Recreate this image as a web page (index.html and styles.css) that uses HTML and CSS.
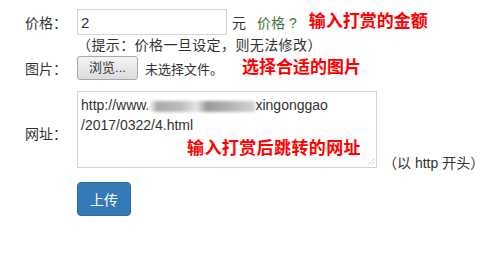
FILE: index.html
```html
<!DOCTYPE html>
<html lang="zh">
<head>
    <meta charset="UTF-8">
    <meta name="viewport" content="width=device-width, initial-scale=1.0">
    <title>打赏设置</title>
    <link rel="stylesheet" href="styles.css">
</head>
<body>
    <form class="reward-form">
        <div class="row row-price">
            <label class="label">价格：</label>
            <input type="text" class="price-input" value="2">
            <span class="unit">元</span>
            <span class="help">价格 ?</span>
            <span class="note">输入打赏的金额</span>
        </div>
        <div class="hint">（提示：价格一旦设定，则无法修改）</div>

        <div class="row row-image">
            <label class="label">图片：</label>
            <span class="browse-btn">浏览...</span>
            <span class="file-name">未选择文件。</span>
            <span class="note note-image">选择合适的图片</span>
        </div>

        <div class="row row-url">
            <label class="label label-url">网址：</label>
            <div class="url-box">
                <div class="url-text">http://www.<span class="blur"></span>xingonggao<br>/2017/0322/4.html</div>
                <span class="note note-url">输入打赏后跳转的网址</span>
                <svg class="grip" width="8" height="8" viewBox="0 0 8 8">
                    <path d="M7 1 L1 7 M7 4 L4 7" stroke="#b5b5b5" stroke-width="1" stroke-dasharray="1 1"/>
                </svg>
            </div>
            <span class="url-hint">（以 http 开头）</span>
        </div>

        <button type="button" class="submit-btn">上传</button>
    </form>
</body>
</html>
```

FILE: styles.css
```css
body {
    margin: 0;
    background-color: #fff;
    font-family: "Liberation Sans", "Noto Sans CJK SC", sans-serif;
    font-size: 14px;
    color: #333;
}

.reward-form {
    padding: 9px 0 0 25px;
}

.row {
    display: flex;
    align-items: center;
}

.label {
    width: 52px;
    flex-shrink: 0;
}

.price-input {
    box-sizing: border-box;
    width: 150px;
    height: 26px;
    padding: 2px 3px;
    border: 1px solid #d4d4d4;
    font-family: "Liberation Sans", sans-serif;
    font-size: 15px;
    color: #333;
    outline: none;
}

.unit {
    margin-left: 5px;
}

.help {
    margin-left: 11px;
    color: #3c763d;
}

/* red annotations */
.note {
    margin-left: 12px;
    color: #f00;
    font-weight: bold;
    font-size: 17px;
    line-height: 20px;
}

.hint {
    margin: 3px 0 0 52px;
    line-height: 14px;
    letter-spacing: 0.4px;
}

.row-image {
    margin-top: 4px;
}

.browse-btn {
    box-sizing: border-box;
    width: 61px;
    height: 24px;
    line-height: 22px;
    text-align: center;
    border: 1px solid #a9a9a9;
    border-radius: 3px;
    background: linear-gradient(#f4f4f4, #dcdcdc);
    font-size: 13px;
}

.file-name {
    margin-left: 7px;
    font-size: 13px;
}

.note-image {
    margin-left: 19px;
}

.row-url {
    margin-top: 11px;
    align-items: stretch;
}

.label-url {
    align-self: center;
    padding-top: 6px;
}

.url-box {
    position: relative;
    box-sizing: border-box;
    width: 300px;
    height: 77px;
    border: 1px solid #d4d4d4;
    padding: 3px 3px;
}

.url-text {
    font-size: 14px;
    line-height: 20px;
    color: #333;
}

.blur {
    display: inline-block;
    width: 106px;
    height: 11px;
    vertical-align: middle;
    background: linear-gradient(90deg, #fff 0, #aaa 8%, #bdbdbd 30%, #e4e4e4 45%, #999 55%, #b8b8b8 80%, #d4d4d4 100%);
    filter: blur(1.5px);
}

.note-url {
    position: absolute;
    left: 109px;
    top: 47px;
    margin: 0;
    letter-spacing: 0.4px;
}

.grip {
    position: absolute;
    right: 1px;
    bottom: 1px;
}

.url-hint {
    align-self: flex-end;
    margin-left: 6px;
    margin-bottom: -2px;
    line-height: 14px;
}

.submit-btn {
    display: block;
    margin: 14px 0 0 52px;
    width: 54px;
    height: 34px;
    border: 1px solid #2e6da4;
    border-radius: 4px;
    background-color: #337ab7;
    color: #fff;
    font-family: "Noto Sans CJK SC", sans-serif;
    font-size: 14px;
    cursor: pointer;
}
```
